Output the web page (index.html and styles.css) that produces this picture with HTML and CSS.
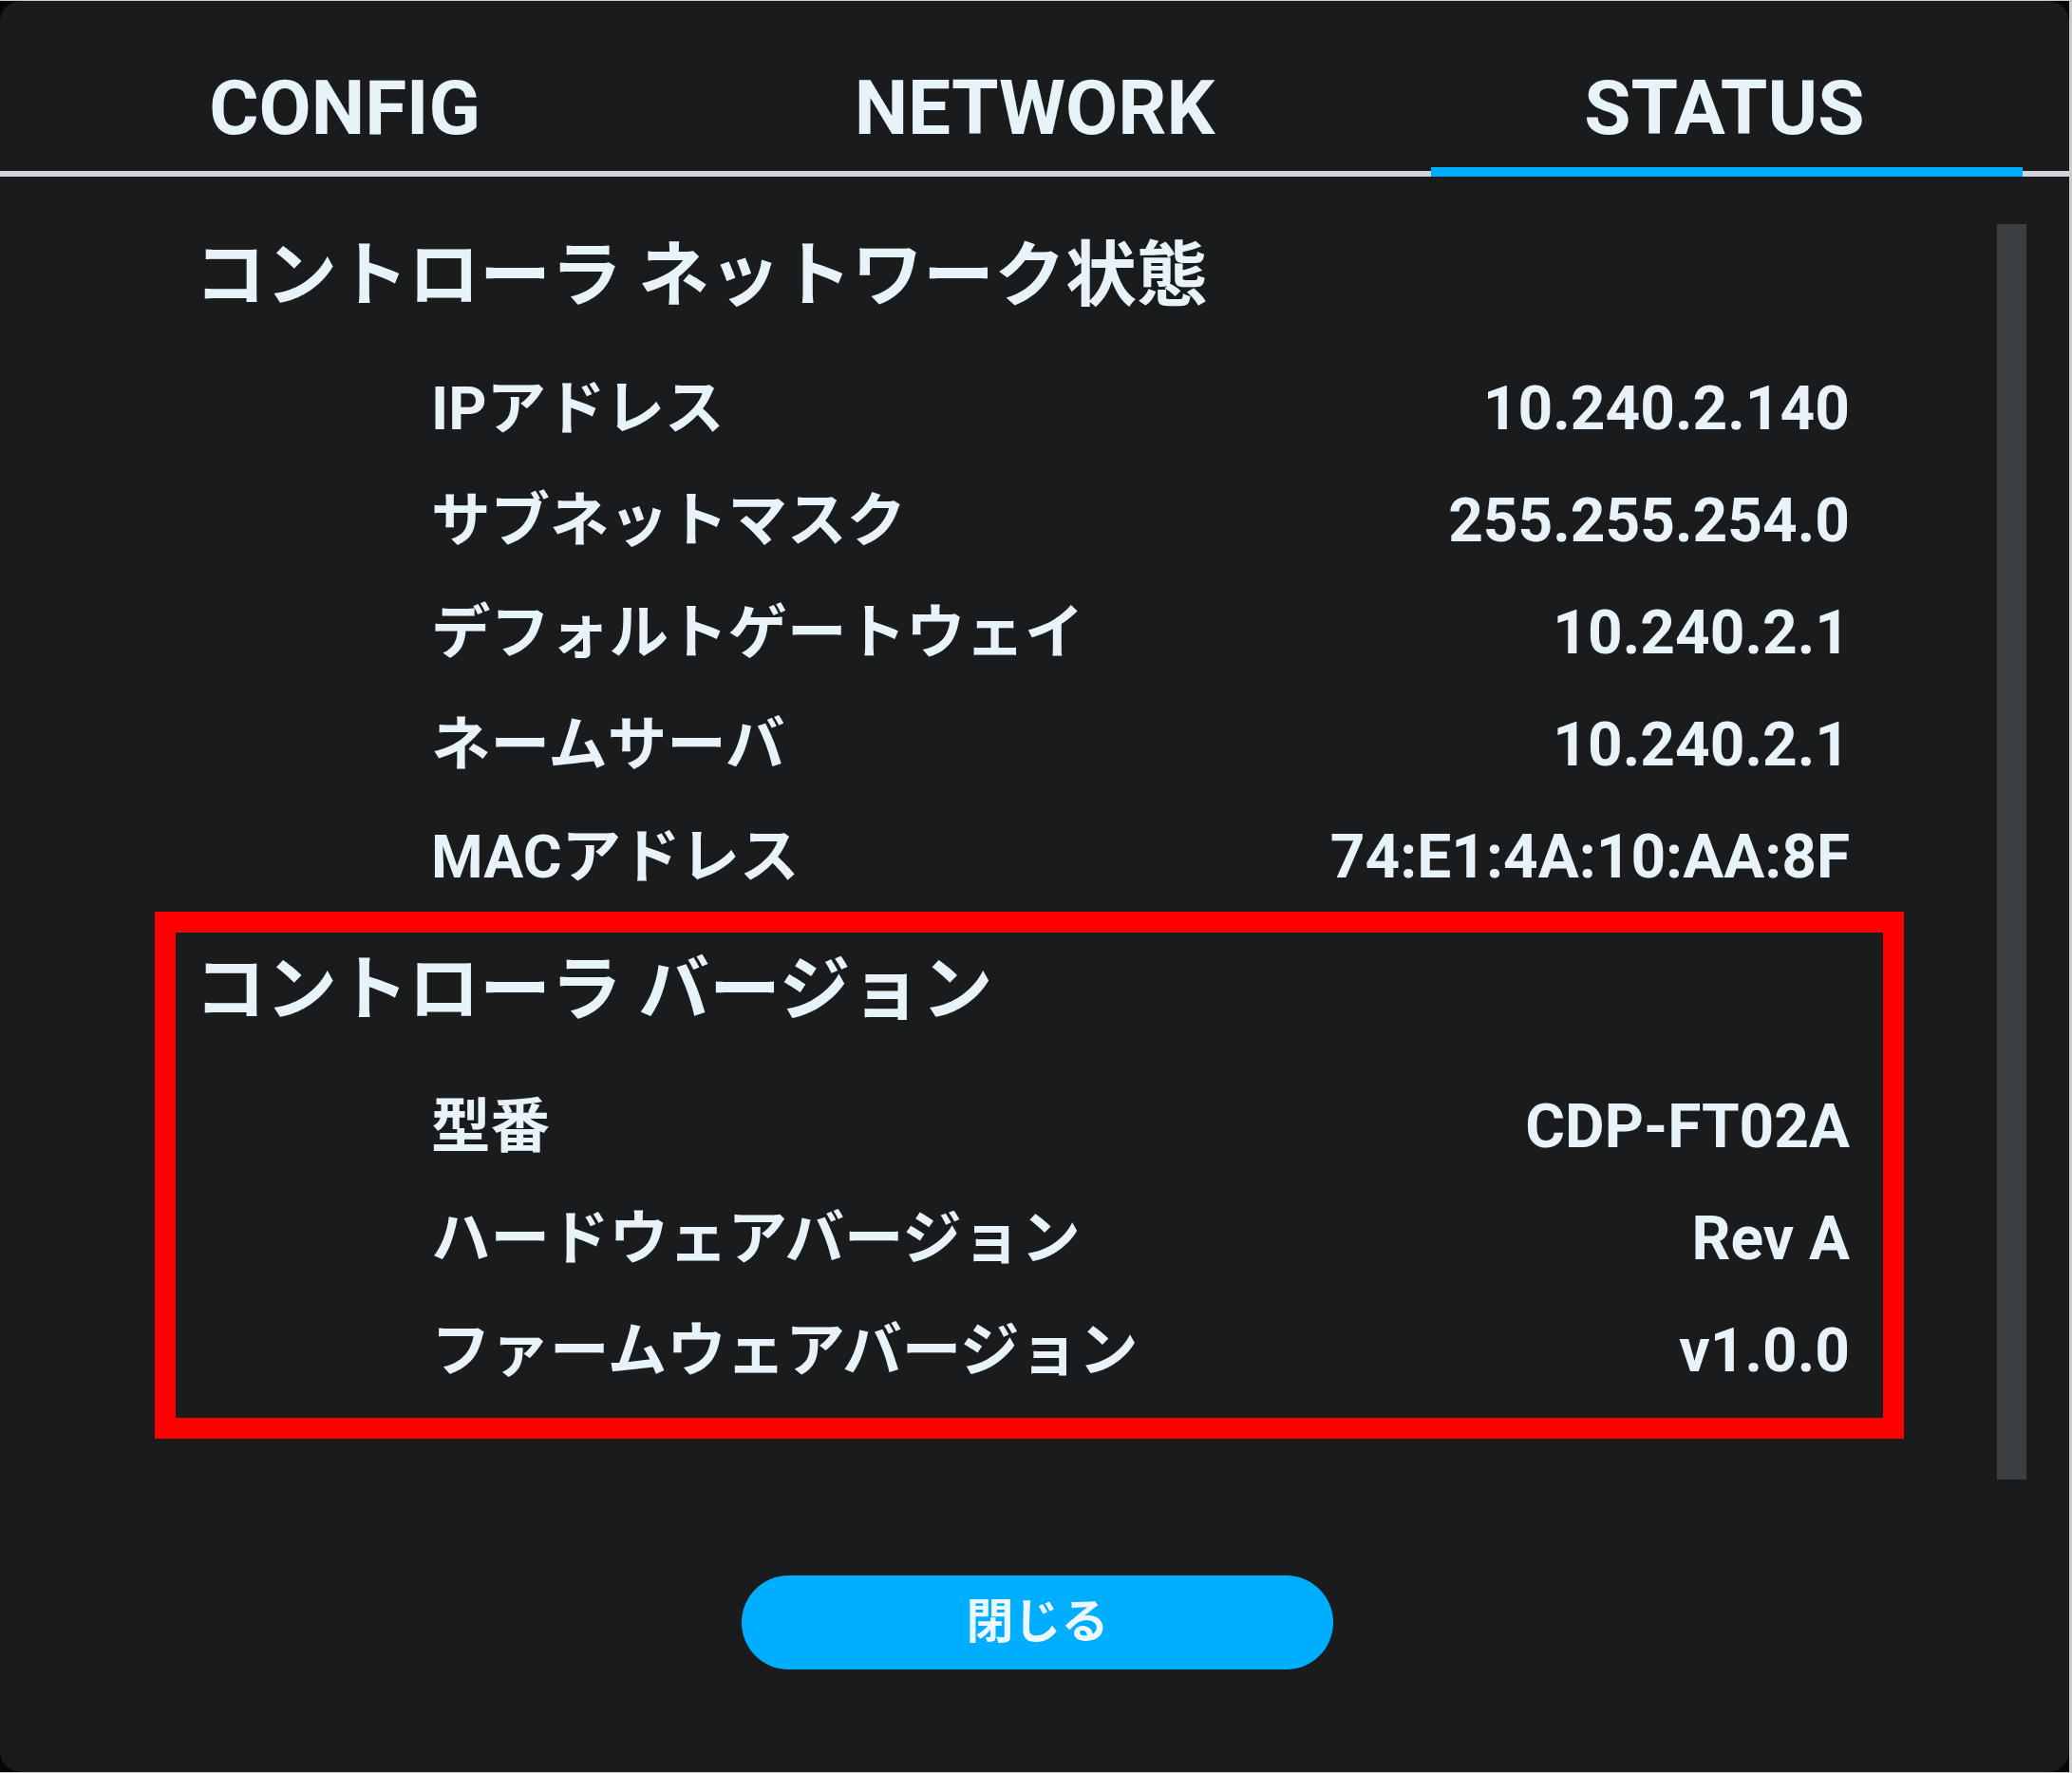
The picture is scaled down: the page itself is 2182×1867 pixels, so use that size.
FILE: index.html
```html
<!DOCTYPE html>
<html lang="ja">
<head>
<meta charset="utf-8">
<title>STATUS</title>
<link rel="stylesheet" href="styles.css">
</head>
<body>
<div class="frame">
  <div class="window">
    <nav class="tabs">
      <div class="tab">CONFIG</div>
      <div class="tab">NETWORK</div>
      <div class="tab active">STATUS</div>
    </nav>
    <div class="body">
      <div class="main">
        <section class="section">
          <h2 class="heading">コントローラ ネットワーク状態</h2>
          <div class="rows">
            <div class="row"><span class="label">IPアドレス</span><span class="value">10.240.2.140</span></div>
            <div class="row"><span class="label">サブネットマスク</span><span class="value">255.255.254.0</span></div>
            <div class="row"><span class="label">デフォルトゲートウェイ</span><span class="value">10.240.2.1</span></div>
            <div class="row"><span class="label">ネームサーバ</span><span class="value">10.240.2.1</span></div>
            <div class="row"><span class="label">MACアドレス</span><span class="value">74:E1:4A:10:AA:8F</span></div>
          </div>
        </section>
        <section class="section annot">
          <h2 class="heading">コントローラ バージョン</h2>
          <div class="rows">
            <div class="row"><span class="label">型番</span><span class="value">CDP-FT02A</span></div>
            <div class="row"><span class="label">ハードウェアバージョン</span><span class="value">Rev A</span></div>
            <div class="row"><span class="label">ファームウェアバージョン</span><span class="value">v1.0.0</span></div>
          </div>
        </section>
      </div>
      <div class="scrollbar"></div>
    </div>
    <div class="footer">
      <button class="close">閉じる</button>
    </div>
  </div>
</div>
</body>
</html>
```

FILE: styles.css
```css
html, body {
  margin: 0;
  padding: 0;
}

body {
  background: #c9cbcd;
  padding: 1px 3px 1px 0;
  font-family: Roboto, "Noto Sans CJK JP", sans-serif;
  font-weight: 700;
  color: #e8f2f9;
}

.frame {
  width: 2179px;
  height: 1865px;
  background: #060606;
}

.window {
  width: 100%;
  height: 100%;
  background: #1a1b1d;
  border-radius: 22px;
  overflow: hidden;
  display: flex;
  flex-direction: column;
}

.tabs {
  display: grid;
  grid-template-columns: repeat(3, 1fr);
  height: 179px;
  border-bottom: 6px solid #d0d4d8;
  flex: none;
}

.tab {
  position: relative;
  display: flex;
  align-items: center;
  justify-content: center;
  padding-top: 47px;
  font-size: 80px;
  line-height: 1;
  color: #e8f2f9;
}

.tab.active::after {
  content: "";
  position: absolute;
  left: 54px;
  right: 49px;
  bottom: -6px;
  height: 10px;
  background: #00aeff;
}

.body {
  display: flex;
  flex: none;
}

.main {
  flex: 1;
  padding-top: 39px;
}

.scrollbar {
  flex: none;
  width: 31px;
  height: 1322px;
  margin-top: 50px;
  margin-right: 45px;
  background: #3c3f42;
}

.heading {
  margin: 0 0 29px 205px;
  height: 118px;
  line-height: 118px;
  font-size: 75px;
  font-weight: 700;
  font-family: "Noto Sans CJK JP", sans-serif;
  white-space: nowrap;
}

.row {
  height: 118px;
  display: flex;
  align-items: center;
  justify-content: space-between;
  padding: 0 155px 0 454px;
  font-size: 64px;
  line-height: 1;
  white-space: nowrap;
}

.label {
  font-size: 62.5px;
}

.annot {
  margin: -2px 98px 0 163px;
  border: 22px solid #ff0000;
  padding: 1px 0 11px;
}

.annot .heading {
  margin: -6px 0 33px 20px;
}

.annot .row {
  padding: 0 35px 0 269px;
}

.footer {
  display: flex;
  justify-content: center;
  padding: 101px 0 0 6px;
}

.close {
  width: 623px;
  height: 99px;
  border: none;
  border-radius: 50px;
  background: #00aeff;
  color: #eef7ff;
  font-family: "Noto Sans CJK JP", sans-serif;
  font-weight: 700;
  font-size: 50px;
  line-height: 1;
  padding: 0 0 12px;
}
```
